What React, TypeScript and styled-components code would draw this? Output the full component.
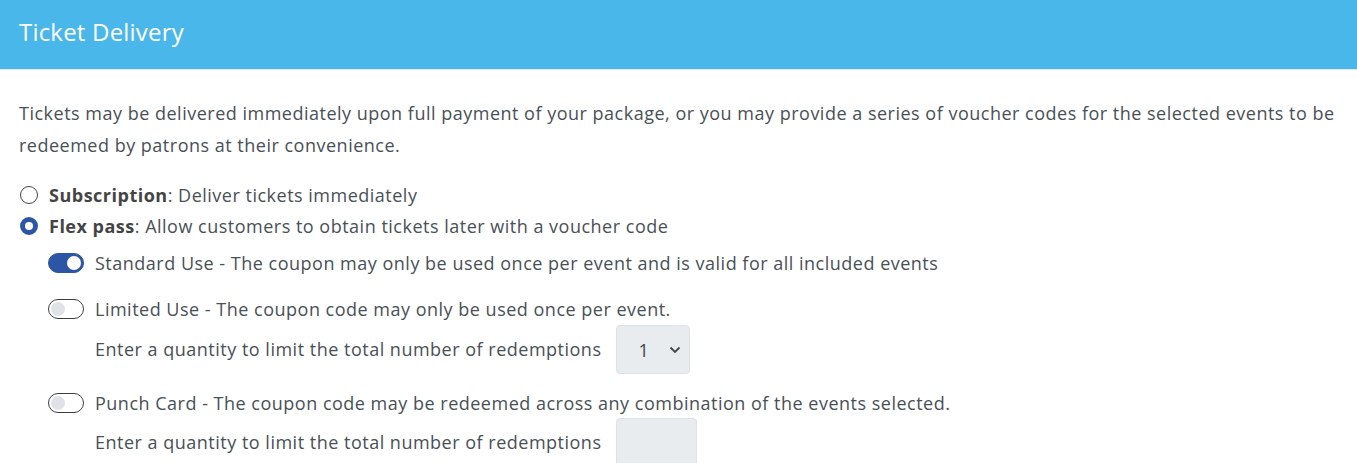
import styled, { createGlobalStyle } from "styled-components";

const GlobalStyle = createGlobalStyle`
  body {
    margin: 0;
    background: #ffffff;
    font-family: "Open Sans", "Noto Sans", sans-serif;
    color: #495057;
  }
`;

const Card = styled.section`
  background: #fff;
`;

const Header = styled.header`
  background: #4ab7eb;
  height: 70px;
  display: flex;
  align-items: center;
  padding: 0 19px;
  border-bottom: 1px solid #e4e7ea;
  box-sizing: border-box;
`;

const Title = styled.h2`
  margin: 0;
  color: #fff;
  font-size: 24px;
  font-weight: 400;
  letter-spacing: 0.2px;
  position: relative;
  top: -3px;
`;

const Body = styled.div`
  padding: 27px 4px 0 19px;
  font-size: 18px;
  letter-spacing: 0.5px;
`;

const Intro = styled.p`
  margin: 0 0 18px;
  line-height: 32px;
`;

const Option = styled.label`
  display: flex;
  align-items: center;
  gap: 11px;
  height: 31px;
`;

const Radio = styled.span<{ $checked?: boolean }>`
  width: 18px;
  height: 18px;
  border-radius: 50%;
  box-sizing: border-box;
  margin-left: 1px;
  border: ${({ $checked }) => ($checked ? "5px solid #2c55a5" : "1px solid #444")};
  background: #fff;
  flex-shrink: 0;
`;

const Strong = styled.b`
  font-weight: 700;
  color: #444;
`;

const SubList = styled.div`
  padding-left: 29px;
  display: flex;
  flex-direction: column;
`;

const ToggleRow = styled.div<{ $top: number }>`
  display: flex;
  align-items: center;
  gap: 11px;
  margin-top: ${({ $top }) => $top}px;
  height: 28px;
`;

const Toggle = styled.span<{ $on?: boolean }>`
  width: 36px;
  height: 20px;
  border-radius: 10px;
  box-sizing: border-box;
  flex-shrink: 0;
  border: 1px solid ${({ $on }) => ($on ? "#2c55a5" : "#3d3d3d")};
  background: ${({ $on }) => ($on ? "#2c55a5" : "#fff")};
  display: flex;
  align-items: center;
  justify-content: ${({ $on }) => ($on ? "flex-end" : "flex-start")};
  padding: 0 2px;

  &::after {
    content: "";
    width: 14px;
    height: 14px;
    border-radius: 50%;
    background: ${({ $on }) => ($on ? "#fff" : "#dfe2e6")};
  }
`;

const QtyRow = styled.div<{ $top: number }>`
  display: flex;
  align-items: center;
  gap: 15px;
  padding-left: 47px;
  margin-top: ${({ $top }) => $top}px;
`;

const QtyLabel = styled.span`
  padding-bottom: 2px;
`;

const Select = styled.div`
  width: 74px;
  height: 49px;
  box-sizing: border-box;
  background: #e9ecef;
  border: 1px solid #dee2e6;
  border-radius: 4px;
  display: flex;
  align-items: center;
  justify-content: space-between;
  padding: 0 8px 0 21px;
  font-size: 18px;
  color: #444;
`;

const Field = styled.div`
  width: 81px;
  height: 49px;
  box-sizing: border-box;
  background: #e9ecef;
  border: 1px solid #dee2e6;
  border-radius: 4px;
`;

export default function App() {
  return (
    <>
      <GlobalStyle />
      <Card>
        <Header>
          <Title>Ticket Delivery</Title>
        </Header>
        <Body>
          <Intro>
            Tickets may be delivered immediately upon full payment of your package, or you may provide a
            series of voucher codes for the selected events to be redeemed by patrons at their convenience.
          </Intro>
          <Option>
            <Radio />
            <span>
              <Strong>Subscription</Strong>: Deliver tickets immediately
            </span>
          </Option>
          <Option>
            <Radio $checked />
            <span>
              <Strong>Flex pass</Strong>: Allow customers to obtain tickets later with a voucher code
            </span>
          </Option>
          <SubList>
            <ToggleRow $top={8}>
              <Toggle $on />
              <span>Standard Use - The coupon may only be used once per event and is valid for all included events</span>
            </ToggleRow>
            <ToggleRow $top={18}>
              <Toggle />
              <span>Limited Use - The coupon code may only be used once per event.</span>
            </ToggleRow>
            <QtyRow $top={2}>
              <QtyLabel>Enter a quantity to limit the total number of redemptions</QtyLabel>
              <Select>
                <span>1</span>
                <svg width="12" height="8" viewBox="0 0 12 8">
                  <path d="M1.5 1.5 6 6l4.5-4.5" fill="none" stroke="#444" strokeWidth="1.8" />
                </svg>
              </Select>
            </QtyRow>
            <ToggleRow $top={15}>
              <Toggle />
              <span>Punch Card - The coupon code may be redeemed across any combination of the events selected.</span>
            </ToggleRow>
            <QtyRow $top={1}>
              <QtyLabel>Enter a quantity to limit the total number of redemptions</QtyLabel>
              <Field />
            </QtyRow>
          </SubList>
        </Body>
      </Card>
    </>
  );
}
